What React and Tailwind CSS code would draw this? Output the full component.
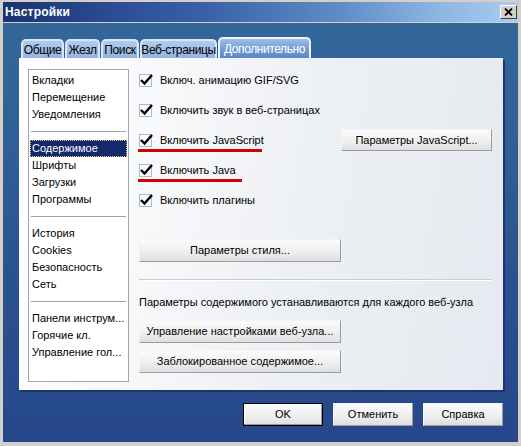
import React from "react";

const font = { fontFamily: '"Liberation Sans", Arial, sans-serif' };

function Check() {
  return (
    <div className="relative w-[13px] h-[13px] border border-[#a9b9cf] bg-white/40 shrink-0">
      <svg className="absolute -left-[1px] -top-[3px]" width="15" height="15" viewBox="0 0 15 15">
        <path d="M2 8 L5.5 11.5 L13 3" fill="none" stroke="#000" strokeWidth="2.4" />
      </svg>
    </div>
  );
}

function Btn({ children, className = "", def = false }) {
  return (
    <div
      className={
        "flex items-center justify-center text-[11px] text-black bg-[linear-gradient(180deg,#fbfbfb_0%,#eeeeee_60%,#dedede_100%)] border " +
        (def
          ? "border-black shadow-[inset_-1px_-1px_0_#9a9a9a,inset_1px_1px_0_#ffffff]"
          : "border-t-[#f4f4f4] border-l-[#f4f4f4] border-r-[#9c9c9c] border-b-[#9c9c9c]") +
        " " +
        className
      }
    >
      {children}
    </div>
  );
}

function Row({ label, underline }) {
  return (
    <div className="h-[30px] flex items-center">
      <div className="relative flex items-center">
        <Check />
        <span className="ml-[8px] text-[11px] leading-[13px] text-black">{label}</span>
        {underline && (
          <div className="absolute left-[-1px] top-[15px] h-[3px] bg-[#d40000]" style={{ width: underline }} />
        )}
      </div>
    </div>
  );
}

const groups = [
  ["Вкладки", "Перемещение", "Уведомления"],
  ["Содержимое", "Шрифты", "Загрузки", "Программы"],
  ["История", "Cookies", "Безопасность", "Сеть"],
  ["Панели инструм...", "Горячие кл.", "Управление гол..."],
];

const tabs = [
  ["Общие", "w-[43px]"],
  ["Жезл", "w-[35px]"],
  ["Поиск", "w-[38px]"],
  ["Веб-страницы", "w-[77px]"],
];

export default function App() {
  return (
    <div style={font} className="w-[521px] h-[446px] bg-[#d4d0c8] flex flex-col pt-[2px] px-[3px] pb-[4px] overflow-hidden">
      {/* Title bar */}
      <div className="h-[20px] shrink-0 flex items-center justify-between pl-[2px] pr-[1px] bg-[linear-gradient(90deg,#17346f_0%,#2a4a92_20%,#3b62a8_40%,#5d8cc6_65%,#8fb6e2_85%,#a9cdf2_100%)]">
        <span className="text-white font-bold text-[12px] tracking-[0.2px]">Настройки</span>
        <div className="w-[17px] h-[14px] bg-[#d4d0c8] border border-t-white border-l-white border-r-[#404040] border-b-[#404040] flex items-center justify-center">
          <svg width="9" height="8" viewBox="0 0 9 8">
            <path d="M1 0.5 L8 7.5 M8 0.5 L1 7.5" stroke="#000" strokeWidth="1.8" />
          </svg>
        </div>
      </div>

      {/* Body */}
      <div className="mt-[1px] flex-1 flex flex-col pl-[16px] pr-[15px] pt-[14px] bg-[linear-gradient(180deg,#33679a_0%,#2f5f96_30%,#2a5290_60%,#26478a_100%)]">
        {/* Tabs */}
        <div className="h-[21px] flex items-end gap-[1px] pl-[2px]">
          {tabs.map(([t, w]) => (
            <div
              key={t}
              className={
                w +
                " h-[19px] rounded-t-[5px] border-2 border-b-0 border-[#d9e6f7] bg-[linear-gradient(180deg,#b1cbec_0%,#93b4e0_100%)] flex items-center justify-center text-[12px] tracking-[-0.4px] whitespace-nowrap text-black leading-none pt-[1px]"
              }
            >
              {t}
            </div>
          ))}
          <div className="w-[93px] h-[21px] rounded-t-[5px] border-2 border-b-0 border-[#eef4fc] bg-[linear-gradient(180deg,#9cbde6_0%,#6f9ad4_60%,#5b86c6_100%)] flex items-center justify-center text-[12px] tracking-[-0.4px] whitespace-nowrap text-white leading-none">
            Дополнительно
          </div>
        </div>

        {/* Panel */}
        <div className="h-[332px] flex pl-[9px] pt-[11px] bg-[linear-gradient(100deg,#ffffff_0%,#f7f8fa_30%,#eceff4_60%,#e6eaf0_100%)] shadow-[2px_2px_0_#1c3570]">
          {/* Left list */}
          <div className="w-[101px] h-[313px] bg-white border border-[#a6a6a6] pt-[2px] px-[1px] text-[11px] text-black">
            {groups.map((g, gi) => (
              <div key={gi}>
                {gi > 0 && (
                  <div className="h-[17px] flex items-center px-[1px]">
                    <div className="w-full h-[1px] bg-[#a0a0a0]" />
                  </div>
                )}
                {g.map((it) => (
                  <div
                    key={it}
                    className={
                      "h-[17px] flex items-center pl-[2px] whitespace-nowrap " +
                      (it === "Содержимое" ? "bg-[#15296a] text-white outline-1 outline-dotted outline-[#d8c880] -outline-offset-1" : "")
                    }
                  >
                    {it}
                  </div>
                ))}
              </div>
            ))}
          </div>

          {/* Right content */}
          <div className="ml-[10px] w-[353px] flex flex-col -mt-[4px]">
            <Row label="Включ. анимацию GIF/SVG" />
            <Row label="Включить звук в веб-страницах" />
            <div className="flex items-center justify-between">
              <Row label="Включить JavaScript" underline={124} />
              <Btn className="w-[151px] h-[22px]">Параметры JavaScript...</Btn>
            </div>
            <Row label="Включить Java" underline={104} />
            <Row label="Включить плагины" />

            <Btn className="mt-[24px] w-[202px] h-[23px]">Параметры стиля...</Btn>

            <div className="mt-[17px] h-[1px] bg-[#c8ccd2] border-b border-white box-content" />

            <div className="mt-[15px] text-[11px] leading-[13px] text-black whitespace-nowrap">
              Параметры содержимого устанавливаются для каждого веб-узла
            </div>

            <Btn className="mt-[11px] w-[202px] h-[23px]">Управление настройками веб-узла...</Btn>
            <Btn className="mt-[7px] w-[202px] h-[23px]">Заблокированное содержимое...</Btn>
          </div>
        </div>

        {/* Bottom buttons */}
        <div className="mt-[13px] flex justify-end gap-[10px]">
          <Btn def className="w-[80px] h-[23px]">OK</Btn>
          <Btn className="w-[80px] h-[23px]">Отменить</Btn>
          <Btn className="w-[80px] h-[23px]">Справка</Btn>
        </div>
      </div>
    </div>
  );
}
